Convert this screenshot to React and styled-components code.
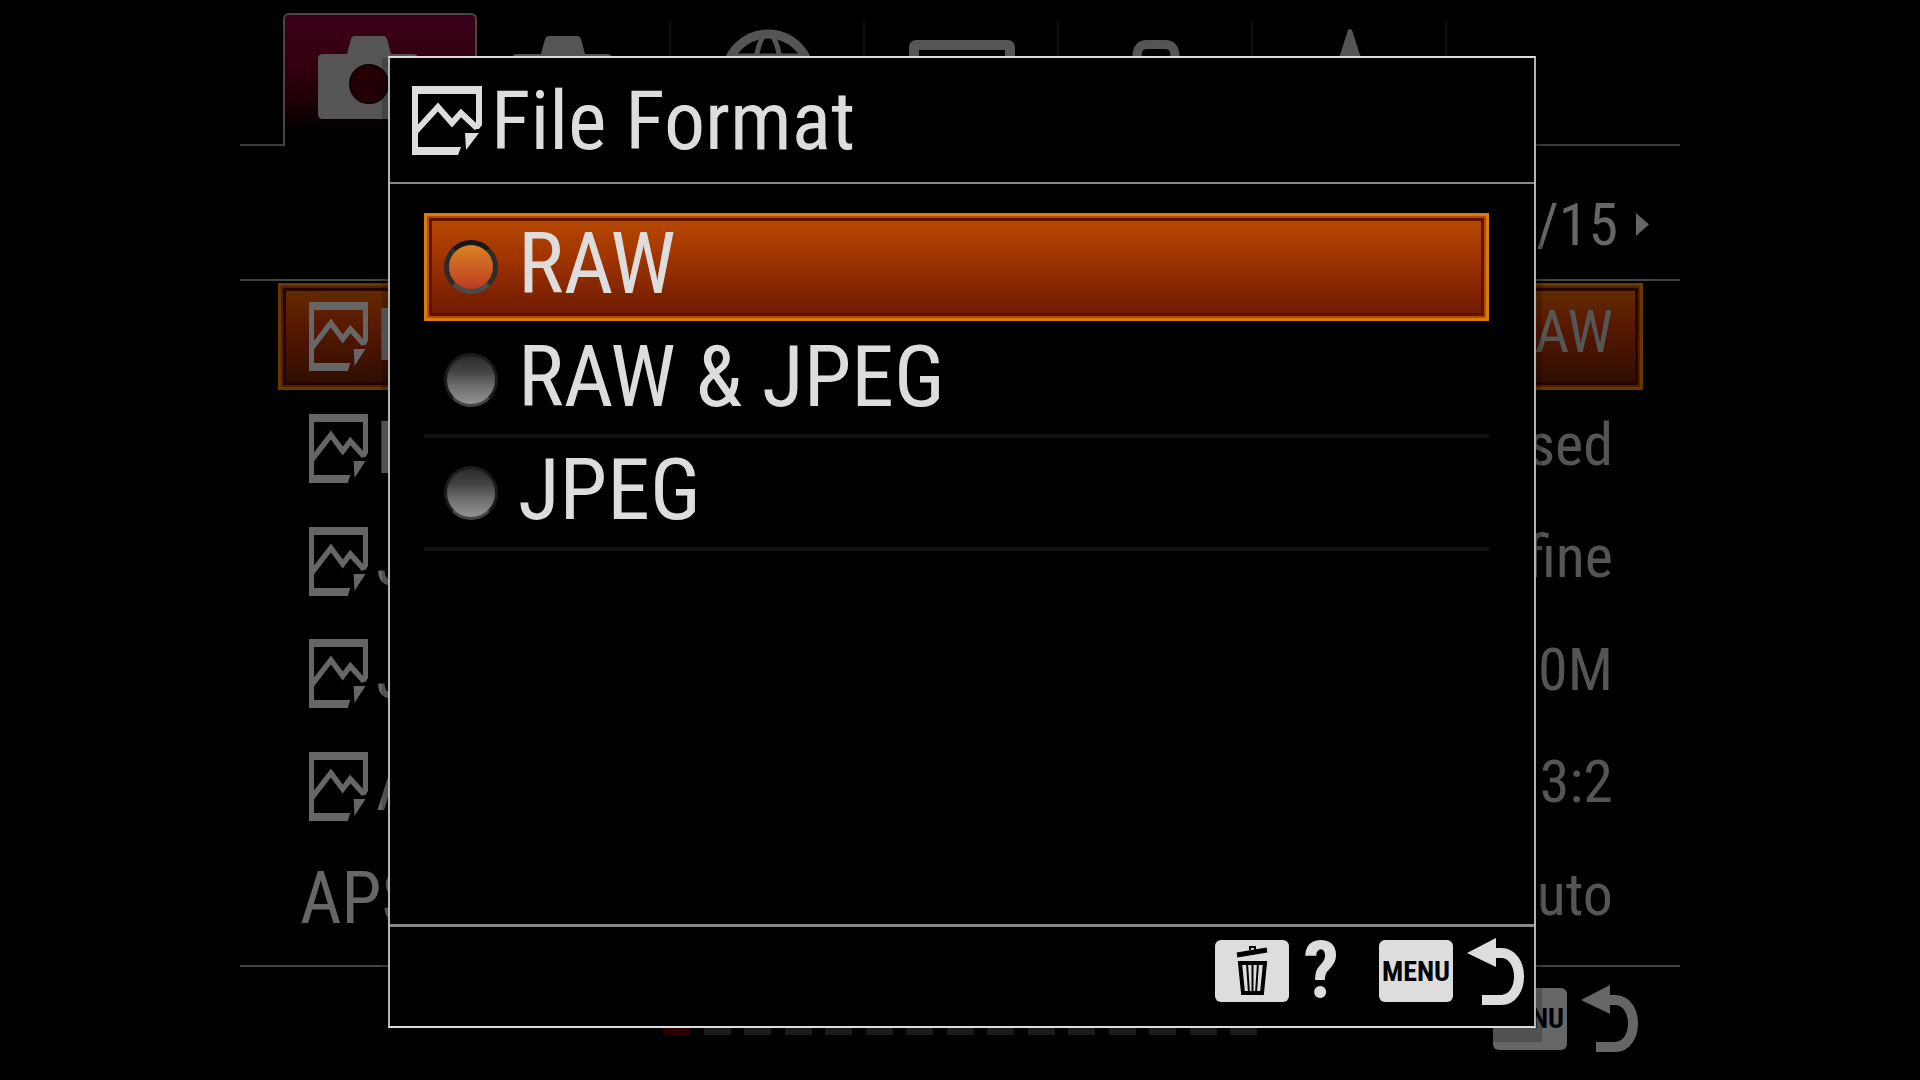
import styled, { createGlobalStyle } from "styled-components"
import { useState } from "react"

const GlobalStyle = createGlobalStyle`
* { box-sizing: border-box; }
body {
margin: 0;
background: #000;
font-family: "Roboto Condensed", Roboto, "Liberation Sans", sans-serif;
}
button {
margin: 0;
padding: 0;
border: none;
background: none;
color: inherit;
font-family: inherit;
cursor: pointer;
}
svg { display: block; flex-shrink: 0; }
`

// 4:3 camera display in the middle of the window
const Screen = styled.main`
position: relative;
width: 75%;
min-height: 100vh;
margin: 0 auto;
display: grid;
grid-template-rows: 146px 135px 1fr 115px;
color: #666;
overflow: hidden;
`

/* ---------- menu behind the dialog ---------- */
const Tabs = styled.nav`
display: grid;
grid-template-columns: 43fr repeat(6, 194fr) 233fr;
`
const TabSpace = styled.div`
border-bottom: 2px solid #3c3c3c;
`
const Tab = styled.button`
display: flex;
justify-content: center;
align-items: flex-start;
color: #555;
border-bottom: 2px solid #3c3c3c;
padding-top: 28px;
background: linear-gradient(#0e0e0e, #0e0e0e) right 22px / 2px 100px no-repeat;
${(p) => p.$active && `
margin-top: 13px;
padding-top: 13px;
border: 2px solid #4c4448;
border-bottom: none;
border-radius: 6px 6px 0 0;
background: linear-gradient(#3a0019 0%, #33000f 38%, #1c0006 68%, #000 88%);
`}
`
const PageBar = styled.div`
display: flex;
justify-content: flex-end;
align-items: center;
gap: 18px;
padding: 24px 31px 0 0;
border-bottom: 2px solid #444;
font-size: 60px;
`
const Settings = styled.ul`
list-style: none;
margin: 0;
padding: 0 37px 9px 38px;
display: grid;
grid-auto-rows: 1fr;
`
const Setting = styled.li`
display: flex;
align-items: center;
justify-content: space-between;
margin: 2px 0 4px;
padding: 0 27px 0 ${(p) => (p.$plain ? "19px" : "28px")};
border: 3px solid transparent;
${(p) => p.$active && `
border-color: #693800;
background: linear-gradient(#642e00, #571800 40%, #2c0d00);
box-shadow: inset 0 0 0 2px #4c2000, inset 0 0 0 5px #280400;
`}
`
const SettingName = styled.span`
display: flex;
align-items: center;
gap: 8px;
font-size: 72px;
line-height: 1;
white-space: nowrap;
`
const SettingValue = styled.span`
font-size: 60px;
line-height: 1;
color: #555;
padding-bottom: 8px;
white-space: nowrap;
`
const BottomBar = styled.footer`
display: grid;
grid-template-columns: 1fr 594px 1fr;
align-items: start;
border-top: 2px solid #444;
padding: 18px 42px 0;
`
const Pager = styled.div`
grid-column: 2;
display: flex;
justify-content: space-between;
padding-top: 36px;
`
const Dash = styled.span`
width: 27px;
height: 14px;
background: ${(p) => (p.$active ? "#380000" : "#222")};
`

/* ---------- dialog ---------- */
const Overlay = styled.div`
position: absolute;
inset: 0;
display: flex;
padding: 56px 144px 52px 148px;
`
const Dialog = styled.section`
flex: 1;
display: flex;
flex-direction: column;
background: #000;
color: #ddd;
border: 2px solid;
border-color: #ddd #b4b4b4;
box-shadow: 0 8px 0 6px rgba(0, 0, 0, 0.2);
`
const Header = styled.header`
display: flex;
align-items: center;
gap: 9px;
height: 126px;
padding-left: 22px;
border-bottom: 2px solid #888;
`
const Title = styled.h1`
margin: 0;
padding-top: 2px;
font-size: 82px;
line-height: 1;
font-weight: 400;
`
const Options = styled.div`
flex: 1;
padding: 29px 45px 0 34px;
`
const Option = styled.label`
display: flex;
align-items: center;
gap: 20px;
height: 113px;
padding: 0 20px;
font-size: 86px;
line-height: 1;
border-bottom: 4px solid #111;
cursor: pointer;
&:has(input:checked) {
height: 108px;
margin-bottom: 4px;
padding: 0 17px;
border: 3px solid #dd7a0c;
background: linear-gradient(#b84a00, #a03500 40%, #7c2200 80%, #6c1c00);
box-shadow: inset 0 0 0 2px #b04c08, inset 0 0 0 5px #641000;
}
`
const OptionText = styled.span`
padding-bottom: 6px;
`
const Radio = styled.input`
appearance: none;
width: 54px;
height: 54px;
margin: 0;
border-radius: 50%;
border: 3px solid #1c1c1c;
border-bottom-color: #444;
background: linear-gradient(#262626, #444 35%, #6c6c6c 60%, #999);
background-origin: border-box;
&:checked {
border: 5px solid #222;
border-color: #181818 #2c2c2c #4a4a4a;
background: linear-gradient(#dc8022, #cc6022 50%, #bc3c20);
}
`
const Footer = styled.footer`
display: flex;
justify-content: flex-end;
align-items: center;
gap: 40px;
height: 102px;
padding: 0 10px 11px;
border-top: 3px solid #888;
`
const KeyButton = styled.button`
display: flex;
align-items: center;
gap: 14px;
justify-self: end;
`
const KeyCap = styled.span`
display: flex;
justify-content: center;
align-items: center;
width: 74px;
height: 62px;
border-radius: 6px;
background: ${(p) => (p.$dim ? "#666" : "#ddd")};
color: #000;
font-size: 28px;
font-weight: 700;
`
const Question = styled.span`
font-size: 80px;
line-height: 62px;
font-weight: 700;
`

const StillIcon = ({ width = 59 }) => (
    <svg width={width} height="69" viewBox="0 0 70 69" preserveAspectRatio="none" fill="currentColor">
        <path d="M0 0H70V39L67 43H64V8H6V61H49L46 69H0Z" />
        <path d="M4 45L26 21L40 37L49 27L65 42" fill="none" stroke="currentColor" strokeWidth="6" />
        <path d="M53 47H67L54 64Z" />
    </svg>
)

const CameraIcon = () => (
    <svg width="124" height="96" viewBox="0 0 124 96" fill="currentColor">
        <path d="M5 26H29L33 11Q34 8 37 8H65Q68 8 69 11L73 26H95Q100 26 100 31V86Q100 91 95 91H5Q0 91 0 86V31Q0 26 5 26Z" />
        <circle cx="51" cy="56" r="19" fill="#220004" stroke="#0c0002" strokeWidth="2" />
    </svg>
)

const GlobeIcon = () => (
    <svg width="100" height="96" viewBox="0 0 100 96" fill="none" stroke="currentColor" strokeWidth="5">
        <circle cx="50" cy="48" r="42" strokeWidth="9" />
        <ellipse cx="50" cy="48" rx="13" ry="42" />
        <path d="M12 28H88M8 62H92" />
    </svg>
)

const DisplayIcon = () => (
    <svg width="106" height="96" viewBox="0 0 106 96" fill="none" stroke="currentColor" strokeWidth="10">
        <rect x="5" y="17" width="96" height="66" rx="2" />
    </svg>
)

const ToolboxIcon = () => (
    <svg width="100" height="96" viewBox="0 0 100 96" fill="currentColor">
        <path d="M31 40V28Q31 16.500 41 16.500H59Q69 16.500 69 28V40" fill="none" stroke="currentColor" strokeWidth="9" />
        <rect y="34" width="100" height="54" rx="5" />
    </svg>
)

const StarIcon = () => (
    <svg width="100" height="96" viewBox="0 0 100 96" fill="currentColor">
        <path d="M48 2Q50 0 52 2L61 30L98 34L70 56L80 92L50 72L20 92L30 56L2 34L39 30Z" />
    </svg>
)

const TrashIcon = () => (
    <svg width="32" height="50" viewBox="0 0 32 50" fill="none" stroke="currentColor">
        <path d="M1 9L31 4" strokeWidth="5" />
        <path d="M14 4V1H19V4" strokeWidth="2" />
        <path d="M4 17H29L26 47H7Z" strokeWidth="4" />
        <path d="M11 17L13 47M16.500 17V47M22 17L20 47" strokeWidth="2" />
    </svg>
)

const ReturnIcon = () => (
    <svg width="57" height="67" viewBox="0 0 57 67" fill="currentColor">
        <path d="M0 15L29 0V29Z" />
        <path d="M27 15H34C58 15 58 62 34 62H15" fill="none" stroke="currentColor" strokeWidth="10" />
    </svg>
)

const settings = [
    { name: "File", value: "RAW" },
    { name: "RAW", value: "Compressed" },
    { name: "JPEG", value: "Extra fine" },
    { name: "JPEG", value: "L: 60M" },
    { name: "Aspect", value: "3:2" },
    { name: "APS-C", value: "Auto", plain: true },
]

const tabs = [
    { label: "Camera 1", Icon: CameraIcon },
    { label: "Camera 2", Icon: CameraIcon },
    { label: "Network", Icon: GlobeIcon },
    { label: "Playback", Icon: DisplayIcon },
    { label: "Setup", Icon: ToolboxIcon },
    { label: "My Menu", Icon: StarIcon },
]

const formats = ["RAW", "RAW & JPEG", "JPEG"]

const App = () => {
    const [format, setFormat] = useState("RAW")

    return (
        <Screen>
            <GlobalStyle />
            <Tabs>
                <TabSpace />
                {tabs.map(({ label, Icon }, i) => (
                    <Tab key={label} $active={i === 0} aria-label={label}>
                        <Icon />
                    </Tab>
                ))}
                <TabSpace />
            </Tabs>
            <PageBar>
                <span>1/15</span>
                <svg width="13" height="23" viewBox="0 0 13 23" fill="currentColor">
                    <path d="M0 0L13 11.500L0 23Z" />
                </svg>
            </PageBar>
            <Settings>
                {settings.map((s, i) => (
                    <Setting key={i} $active={i === 0} $plain={s.plain}>
                        <SettingName>
                            {!s.plain && <StillIcon />}
                            {s.name}
                        </SettingName>
                        <SettingValue>{s.value}</SettingValue>
                    </Setting>
                ))}
            </Settings>
            <BottomBar>
                <Pager>
                    {Array.from({ length: 15 }, (_, i) => (
                        <Dash key={i} $active={i === 0} />
                    ))}
                </Pager>
                <KeyButton aria-label="Menu back">
                    <KeyCap $dim>MENU</KeyCap>
                    <ReturnIcon />
                </KeyButton>
            </BottomBar>

            <Overlay>
                <Dialog role="dialog" aria-labelledby="dialog-title">
                    <Header>
                        <StillIcon width={70} />
                        <Title id="dialog-title">File Format</Title>
                    </Header>
                    <Options role="radiogroup" aria-labelledby="dialog-title">
                        {formats.map((f) => (
                            <Option key={f}>
                                <Radio
                                    type="radio"
                                    name="format"
                                    value={f}
                                    checked={format === f}
                                    onChange={(e) => setFormat(e.target.value)}
                                />
                                <OptionText>{f}</OptionText>
                            </Option>
                        ))}
                    </Options>
                    <Footer>
                        <KeyButton aria-label="Help">
                            <KeyCap><TrashIcon /></KeyCap>
                            <Question>?</Question>
                        </KeyButton>
                        <KeyButton aria-label="Back">
                            <KeyCap>MENU</KeyCap>
                            <ReturnIcon />
                        </KeyButton>
                    </Footer>
                </Dialog>
            </Overlay>
        </Screen>
    )
}

export default App
